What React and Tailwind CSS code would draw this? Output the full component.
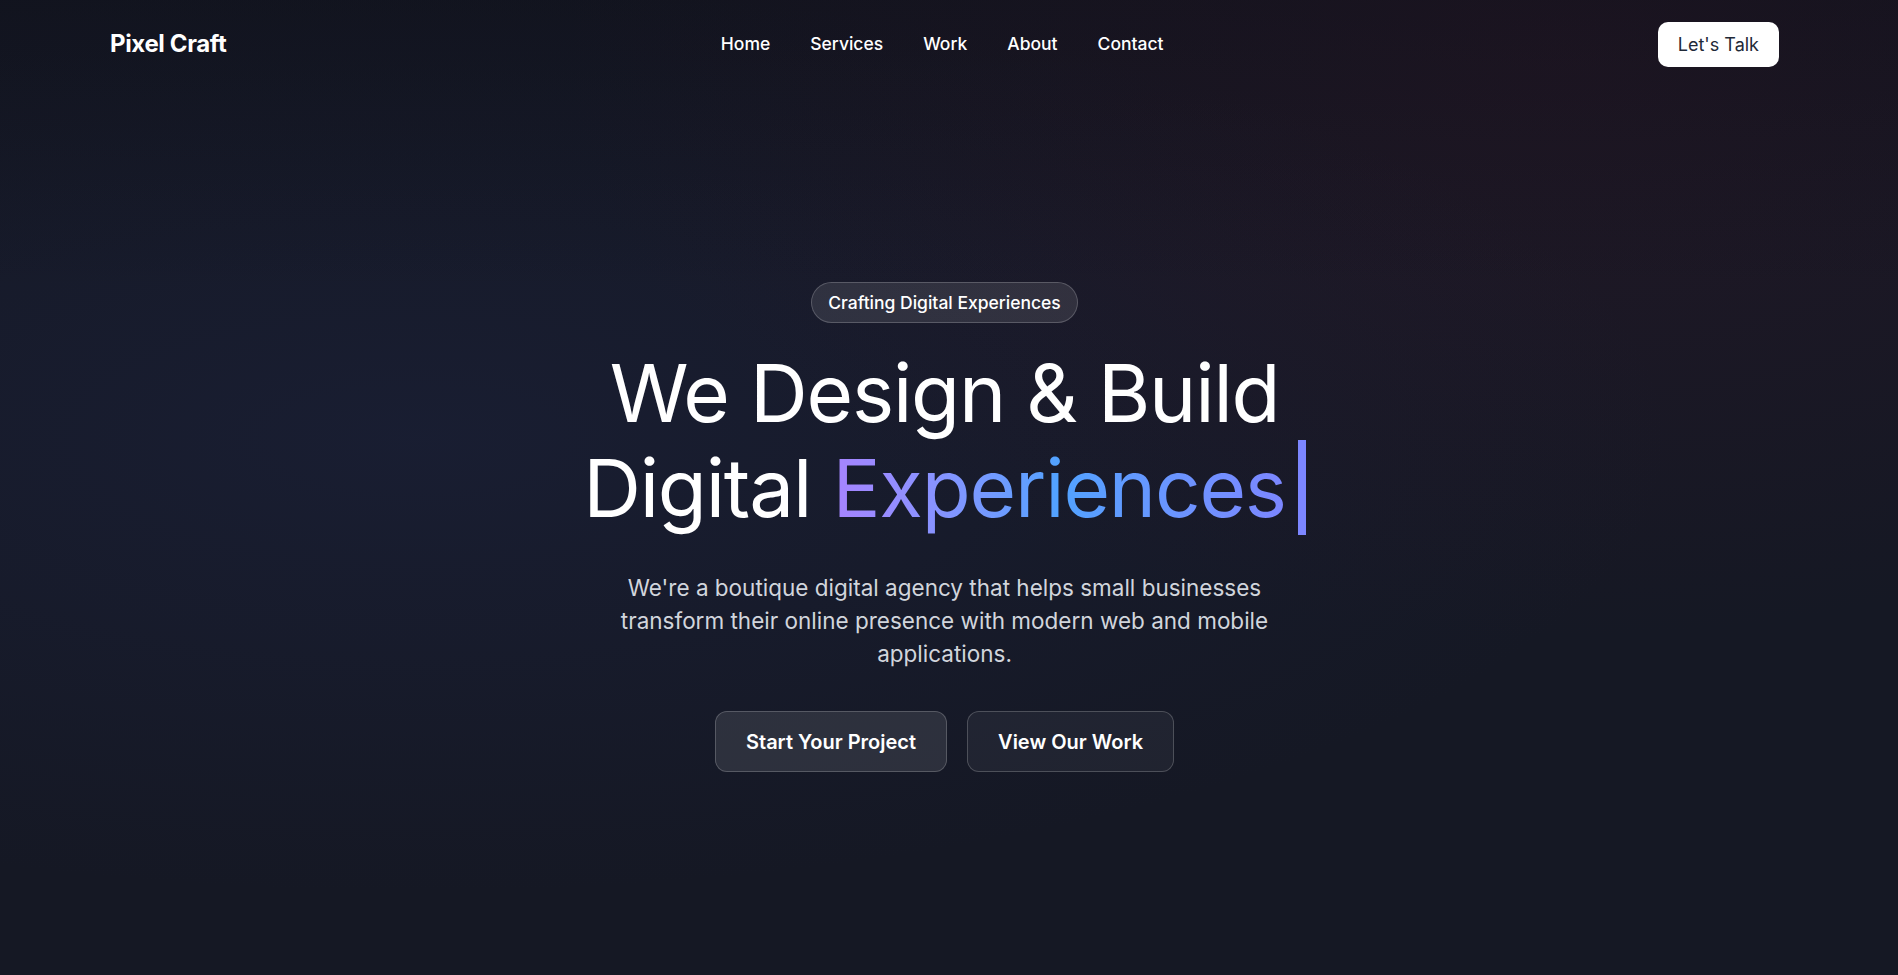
import React from "react";

const navLinks = ["Home", "Services", "Work", "About", "Contact"];

export default function App() {
  return (
    <div className="relative min-h-screen w-full overflow-hidden bg-[#151824] font-['Inter','Noto_Sans',sans-serif] text-white">
      {/* background glows */}
      <div className="pointer-events-none absolute inset-0 bg-[radial-gradient(ellipse_at_22%_45%,rgba(36,46,90,0.25),transparent_60%)]" />
      <div className="pointer-events-none absolute inset-0 bg-[radial-gradient(ellipse_at_82%_5%,rgba(60,22,40,0.3),transparent_45%)]" />
      <div className="pointer-events-none absolute inset-0 bg-[linear-gradient(180deg,rgba(10,10,18,0.3)_0%,transparent_30%)]" />

      <div className="relative flex h-[975px] flex-col pl-[110px] pr-[119px]">
        {/* Header */}
        <header className="flex h-[88px] items-center justify-between">
          <div className="text-[24px] font-bold tracking-[-0.015em]">Pixel Craft</div>
          <nav className="flex items-center gap-10 text-[17.5px] font-medium">
            {navLinks.map((l) => (
              <a key={l} href="#" className="hover:text-gray-300">
                {l}
              </a>
            ))}
          </nav>
          <button className="h-[45px] rounded-[10px] bg-white px-5 text-[18px] text-[#1f2937]">
            Let's Talk
          </button>
        </header>

        {/* Hero */}
        <main className="flex flex-1 flex-col items-center justify-center pb-[9px] text-center">
          <span className="rounded-full border border-white/20 bg-white/10 px-4 py-[7.5px] text-[17.5px] font-medium leading-6">
            Crafting Digital Experiences
          </span>

          <h1 className="mt-[22px] text-[80px] font-normal leading-[95px] tracking-[-0.015em]">
            We Design &amp; Build
            <br />
            Digital{" "}
            <span className="bg-gradient-to-r from-violet-400 via-blue-400 to-indigo-400 bg-clip-text text-transparent">
              Experiences
            </span>
            <span className="ml-3 inline-block h-[95px] w-[8px] bg-indigo-400 align-top" />
          </h1>

          <p className="mt-9 max-w-[720px] text-[22.5px] leading-[33px] text-gray-300">
            We're a boutique digital agency that helps small businesses transform their online
            presence with modern web and mobile applications.
          </p>

          <div className="mt-[41px] flex gap-5">
            <button className="h-[61px] rounded-xl border border-white/20 bg-white/10 px-[30px] text-[20px] font-semibold">
              Start Your Project
            </button>
            <button className="h-[61px] rounded-xl border border-white/20 bg-white/5 px-[30px] text-[20px] font-semibold">
              View Our Work
            </button>
          </div>
        </main>
      </div>
    </div>
  );
}
